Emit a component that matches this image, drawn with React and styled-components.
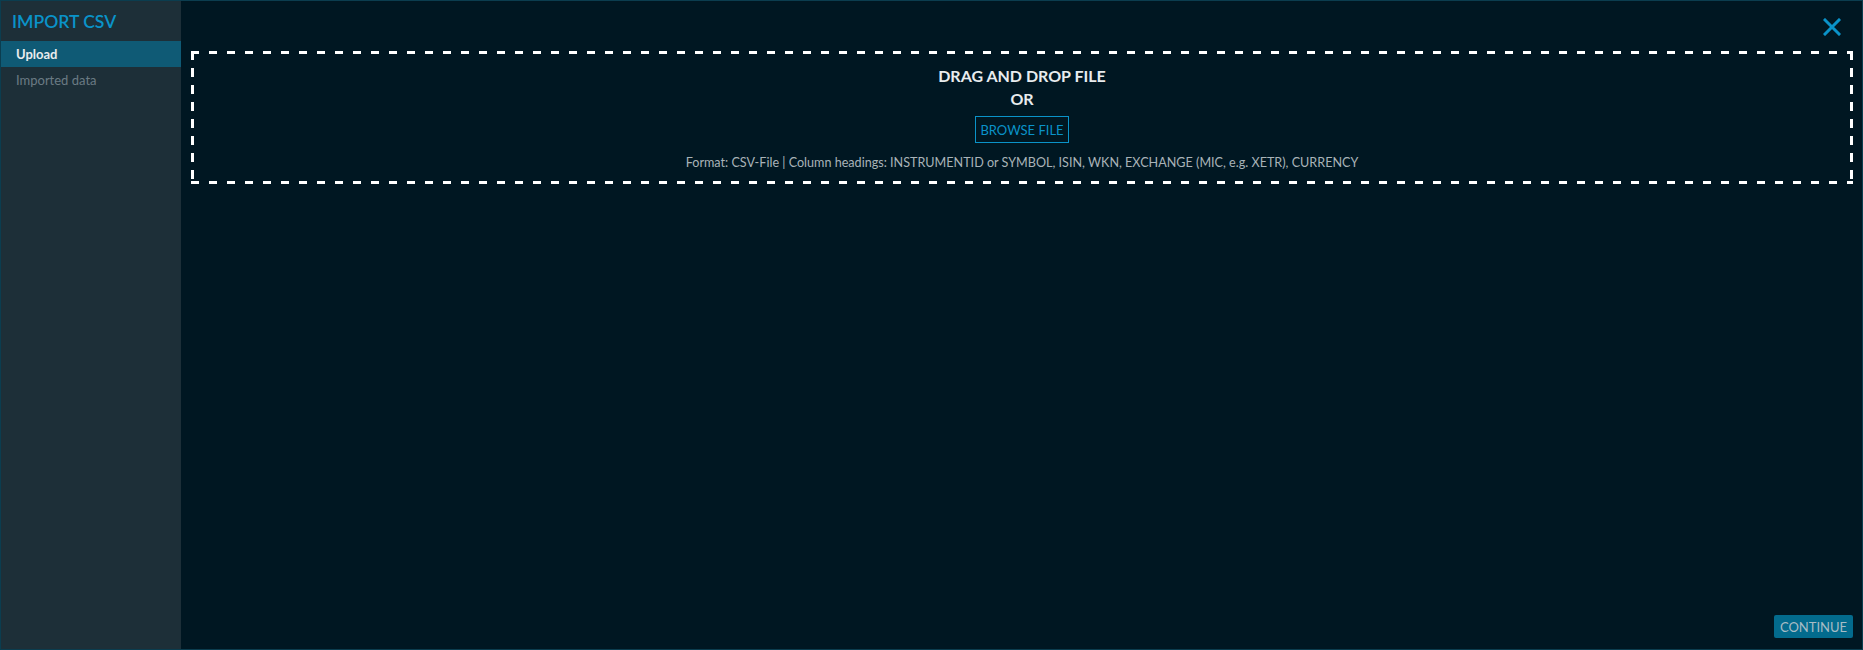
import styled, { createGlobalStyle } from "styled-components";

const GlobalStyle = createGlobalStyle`
  html, body {
    margin: 0;
    padding: 0;
    background: #001722;
  }
  * {
    box-sizing: border-box;
  }
`;

const Dialog = styled.div`
  display: flex;
  width: 1863px;
  height: 650px;
  border: 1px solid #0b3d4f;
  background-color: #001722;
  font-family: Lato, "Open Sans", sans-serif;
`;

const Sidebar = styled.div`
  width: 180px;
  flex-shrink: 0;
  background-color: #1d2f38;
  display: flex;
  flex-direction: column;
`;

const Title = styled.h1`
  margin: 0;
  padding: 10px 0 9px 11px;
  font-size: 17.5px;
  font-weight: 600;
  color: #0a93c9;
`;

const NavItem = styled.div`
  height: 26px;
  display: flex;
  align-items: center;
  padding-left: 15px;
  font-size: 13px;
  font-weight: ${(p) => (p.active ? 700 : 400)};
  color: ${(p) => (p.active ? "#e8ecee" : "#6b7b84")};
  background-color: ${(p) => (p.active ? "#0f5a75" : "transparent")};
`;

const Main = styled.div`
  flex: 1;
  display: flex;
  flex-direction: column;
  padding: 0 9px 11px 10px;
`;

const TopBar = styled.div`
  height: 50px;
  display: flex;
  justify-content: flex-end;
  padding-top: 17px;
  padding-right: 12px;
`;

const CloseButton = styled.button`
  width: 18px;
  height: 18px;
  padding: 0;
  border: none;
  background: none;
  cursor: pointer;
`;

const DropZone = styled.div`
  height: 133px;
  display: flex;
  flex-direction: column;
  align-items: center;
  padding-top: 13px;
  background-image:
    repeating-linear-gradient(90deg, #fff 0 8px, transparent 8px 18px),
    repeating-linear-gradient(90deg, #fff 0 8px, transparent 8px 18px),
    repeating-linear-gradient(180deg, #fff 0 9px, transparent 9px 17px),
    repeating-linear-gradient(180deg, #fff 0 9px, transparent 9px 17px);
  background-size: 100% 3px, 100% 3px, 3px 100%, 3px 100%;
  background-position: left top, left bottom, left top, right top;
  background-repeat: no-repeat;
`;

const DropTitle = styled.div`
  font-size: 16px;
  font-weight: 700;
  color: #e8ecee;
  line-height: 23px;
  text-align: center;
`;

const BrowseButton = styled.button`
  margin-top: 6px;
  width: 94px;
  height: 27px;
  border: 1px solid #0a93c9;
  background: transparent;
  color: #0a93c9;
  font-family: inherit;
  font-size: 13px;
  padding: 0;
  cursor: pointer;
`;

const FormatNote = styled.div`
  margin-top: 12px;
  font-size: 12.6px;
  color: #a9b3b8;
`;

const Spacer = styled.div`
  flex: 1;
`;

const Footer = styled.div`
  display: flex;
  justify-content: flex-end;
`;

const ContinueButton = styled.button`
  width: 79px;
  height: 23px;
  border: none;
  border-radius: 2px;
  background-color: #036b8d;
  color: #a7bcc5;
  font-family: inherit;
  font-size: 13px;
  padding: 0;
  cursor: pointer;
`;

const App = () => {
  return (
    <>
      <GlobalStyle />
      <Dialog>
        <Sidebar>
          <Title>IMPORT CSV</Title>
          <NavItem active>Upload</NavItem>
          <NavItem>Imported data</NavItem>
        </Sidebar>
        <Main>
          <TopBar>
            <CloseButton aria-label="Close">
              <svg width="18" height="18" viewBox="0 0 18 18">
                <path d="M2 2L16 16M16 2L2 16" stroke="#0a93c9" strokeWidth="3" strokeLinecap="square" />
              </svg>
            </CloseButton>
          </TopBar>
          <DropZone>
            <DropTitle>DRAG AND DROP FILE</DropTitle>
            <DropTitle>OR</DropTitle>
            <BrowseButton>BROWSE FILE</BrowseButton>
            <FormatNote>
              Format: CSV-File | Column headings: INSTRUMENTID or SYMBOL, ISIN, WKN, EXCHANGE (MIC, e.g. XETR), CURRENCY
            </FormatNote>
          </DropZone>
          <Spacer />
          <Footer>
            <ContinueButton>CONTINUE</ContinueButton>
          </Footer>
        </Main>
      </Dialog>
    </>
  );
};

export default App;
